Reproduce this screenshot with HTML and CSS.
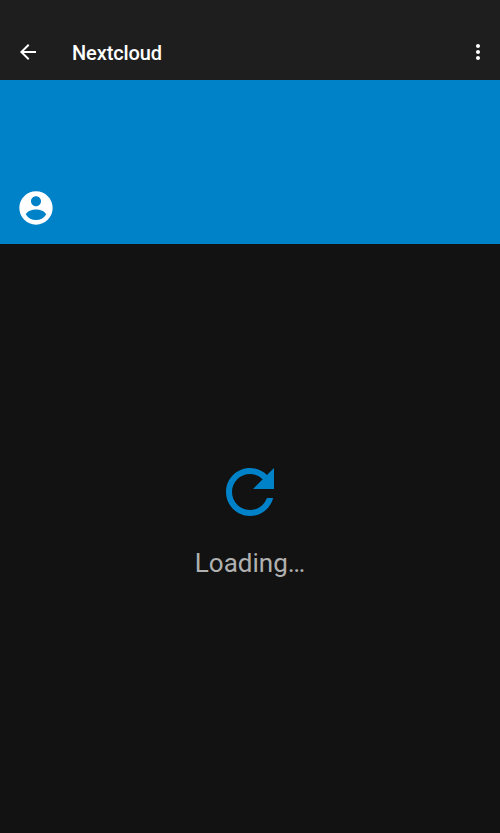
FILE: index.html
```html
<!DOCTYPE html>
<html lang="en">
<head>
<meta charset="utf-8">
<title>Nextcloud</title>
<link rel="stylesheet" href="styles.css">
</head>
<body>
<div class="screen">
  <header class="toolbar">
    <svg class="icon" viewBox="0 0 24 24"><path d="M20 11H7.83l5.59-5.59L12 4l-8 8 8 8 1.41-1.41L7.83 13H20v-2z"/></svg>
    <h1 class="title">Nextcloud</h1>
    <svg class="icon" viewBox="0 0 24 24"><path d="M12 8c1.1 0 2-.9 2-2s-.9-2-2-2-2 .9-2 2 .9 2 2 2zm0 2c-1.1 0-2 .9-2 2s.9 2 2 2 2-.9 2-2-.9-2-2-2zm0 6c-1.1 0-2 .9-2 2s.9 2 2 2 2-.9 2-2-.9-2-2-2z"/></svg>
  </header>
  <section class="banner">
    <svg class="avatar" viewBox="0 0 24 24"><path d="M12 2C6.48 2 2 6.48 2 12s4.48 10 10 10 10-4.48 10-10S17.52 2 12 2zm0 3c1.66 0 3 1.34 3 3s-1.34 3-3 3-3-1.34-3-3 1.34-3 3-3zm0 14.2c-2.5 0-4.71-1.28-6-3.22.03-1.99 4-3.08 6-3.08 1.99 0 5.97 1.09 6 3.08-1.29 1.94-3.5 3.22-6 3.22z"/></svg>
  </section>
  <main class="content">
    <svg class="refresh" viewBox="0 0 24 24"><path d="M17.65 6.35C16.2 4.9 14.21 4 12 4c-4.42 0-7.99 3.58-7.99 8s3.57 8 7.99 8c3.73 0 6.84-2.55 7.73-6h-2.08c-.82 2.33-3.04 4-5.65 4-3.31 0-6-2.69-6-6s2.69-6 6-6c1.66 0 3.14.69 4.22 1.78L13 11h7V4l-2.35 2.35z"/></svg>
    <p class="message">Loading…</p>
  </main>
</div>
</body>
</html>
```
FILE: styles.css
```css
body {
  margin: 0;
  background: #121212;
  font-family: Roboto, sans-serif;
}

.screen {
  display: flex;
  flex-direction: column;
  height: 833px;
}

.toolbar {
  box-sizing: border-box;
  display: flex;
  align-items: center;
  height: 80px;
  padding: 24px 10px 0 16px;
  background: #1e1e1e;
}

.icon {
  width: 24px;
  height: 24px;
  fill: #fff;
}

.title {
  flex: 1;
  margin: 2px 0 0 32px;
  color: #fff;
  font-size: 20px;
  font-weight: 500;
  letter-spacing: -0.1px;
  line-height: 24px;
}

.banner {
  box-sizing: border-box;
  height: 164px;
  padding: 108px 16px 0;
  background: #0082c9;
}

.avatar {
  display: block;
  width: 40px;
  height: 40px;
  fill: #fff;
}

.content {
  flex: 1;
  display: flex;
  flex-direction: column;
  align-items: center;
  padding-top: 212px;
}

.refresh {
  width: 72px;
  height: 72px;
  fill: #0082c9;
}

.message {
  margin: 20px 0 0;
  color: #b0b0b0;
  font-size: 26px;
  line-height: 30px;
}
```
